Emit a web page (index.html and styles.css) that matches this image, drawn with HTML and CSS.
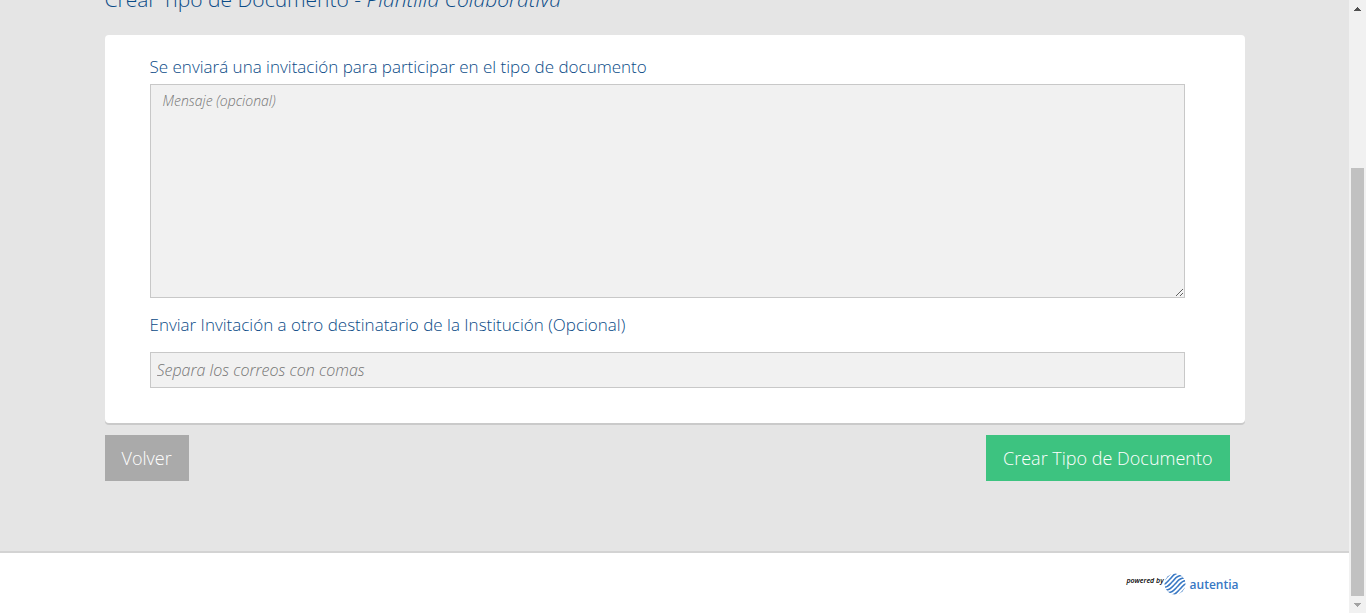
FILE: index.html
```html
<!DOCTYPE html>
<html lang="es">
<head>
<meta charset="utf-8">
<title>Crear Tipo de Documento</title>
<link rel="stylesheet" href="styles.css">
</head>
<body>
<div class="page">
  <form class="content">
    <header class="heading">
      <h1 class="title">Crear Tipo de Documento - <em>Plantilla Colaborativa</em></h1>
    </header>
    <section class="card">
      <label class="label" for="message">Se enviará una invitación para participar en el tipo de documento</label>
      <textarea class="field message" id="message" placeholder="Mensaje (opcional)"></textarea>
      <label class="label" for="emails">Enviar Invitación a otro destinatario de la Institución (Opcional)</label>
      <input class="field emails" id="emails" type="text" placeholder="Separa los correos con comas">
    </section>
    <div class="actions">
      <button class="button back" type="button">Volver</button>
      <button class="button create" type="submit">Crear Tipo de Documento</button>
    </div>
  </form>
  <footer class="footer">
    <div class="brand">
      <span class="powered">powered by</span>
      <svg class="mark" viewBox="0 0 22 22" aria-hidden="true">
        <defs>
          <clipPath id="disc"><circle cx="11" cy="11" r="10.5"/></clipPath>
          <path id="wave" d="M-14 6H-9C-4 6-3 3 0 0S4-6 9-6H14"/>
        </defs>
        <g clip-path="url(#disc)" fill="none" stroke="#3878c4" stroke-width="1.6">
          <use href="#wave" x="1" y="1"/>
          <use href="#wave" x="3.500" y="3.500"/>
          <use href="#wave" x="6" y="6"/>
          <use href="#wave" x="8.500" y="8.500"/>
          <use href="#wave" x="11" y="11"/>
          <use href="#wave" x="13.500" y="13.500"/>
          <use href="#wave" x="16" y="16"/>
          <use href="#wave" x="18.500" y="18.500"/>
          <use href="#wave" x="21" y="21"/>
        </g>
      </svg>
      <span class="name">autentia</span>
    </div>
  </footer>
</div>
<div class="scrollbar" aria-hidden="true">
  <svg class="arrow" viewBox="0 0 17 17" shape-rendering="crispEdges"><path fill="#505050" d="M8 7h1v1h1v1h1v1h1v1H5v-1h1V9h1V8h1z"/></svg>
  <div class="track"><div class="thumb"></div></div>
  <svg class="arrow" viewBox="0 0 17 17" shape-rendering="crispEdges"><path fill="#a3a3a3" d="M5 7h7v1h-1v1h-1v1H9v1H8v-1H7V9H6V8H5z"/></svg>
</div>
</body>
</html>
```
FILE: styles.css
```css
* {
  box-sizing: border-box;
}

body {
  margin: 0;
  height: 100vh;
  display: grid;
  grid-template-columns: 1fr 17px;
  overflow: hidden;
  background: #e5e5e5;
  color: #0a4b87;
  font-family: "Open Sans", sans-serif;
  font-weight: 300;
}

.page {
  display: flex;
  flex-direction: column;
  min-width: 0;
  min-height: 0;
}

.content {
  flex: 1;
  width: 100%;
  max-width: 1140px;
  margin: 0 auto;
}

.heading {
  display: flex;
  align-items: flex-end;
  height: 35px;
  padding-bottom: 22px;
}

.title {
  margin: 0;
  font-size: 21px;
  line-height: 28px;
  font-weight: 300;
}

.card {
  display: flex;
  flex-direction: column;
  padding: 20px 60px 35px 45px;
  background: #fff;
  border-radius: 4px;
  box-shadow: 0 2px 0 #cacaca;
}

.label {
  font-size: 17px;
  line-height: 24px;
}

.field {
  width: 100%;
  border: 1px solid #c8c8c8;
  border-radius: 0;
  background: #f1f1f1;
  color: #555;
  font-family: inherit;
  font-weight: 300;
  font-style: italic;
  outline: none;
}

.field::placeholder {
  color: #757575;
  opacity: 1;
}

.message {
  height: 214px;
  margin: 5px 0 15px;
  padding: 6px 12px;
  font-size: 14px;
  line-height: 20px;
  resize: both;
}

.emails {
  height: 36px;
  margin-top: 15px;
  padding: 0 6px;
  font-size: 16px;
}

.actions {
  display: flex;
  justify-content: space-between;
  padding: 12px 15px 0 0;
}

.button {
  height: 46px;
  padding: 0 17px;
  border: 0;
  color: #fff;
  font-family: inherit;
  font-size: 18px;
  font-weight: 300;
  cursor: pointer;
}

.back {
  background: #aaa;
}

.create {
  background: #3dc380;
}

.footer {
  height: 62px;
  border-top: 2px solid #d3d3d3;
  background: #fff;
}

.brand {
  display: flex;
  justify-content: flex-end;
  align-items: center;
  max-width: 1140px;
  height: 62px;
  margin: 0 auto;
  padding-right: 6px;
}

.powered {
  padding-bottom: 8px;
  color: #000;
  font-size: 7px;
  font-style: italic;
  font-weight: 600;
}

.mark {
  width: 22px;
  height: 22px;
  margin-right: 4px;
}

.name {
  color: #3878c4;
  font-size: 12px;
  font-weight: 600;
}

.scrollbar {
  display: flex;
  flex-direction: column;
  background: #f1f1f1;
}

.arrow {
  width: 17px;
  height: 17px;
}

.track {
  flex: 1;
  display: flex;
  flex-direction: column;
  justify-content: flex-end;
  padding: 0 2px;
}

.thumb {
  height: 74%;
  background: #c1c1c1;
}
```
